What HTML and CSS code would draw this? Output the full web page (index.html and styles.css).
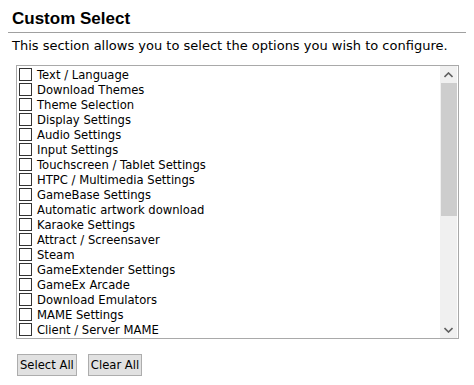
FILE: index.html
```html
<!DOCTYPE html>
<html>
<head>
<meta charset="utf-8">
<link rel="stylesheet" href="styles.css">
</head>
<body>
<h2 class="title">Custom Select</h2>
<p class="desc">This section allows you to select the options you wish to configure.</p>
<div class="listbox">
  <ul class="options">
    <li><input type="checkbox" class="cb"><span>Text / Language</span></li>
    <li><input type="checkbox" class="cb"><span>Download Themes</span></li>
    <li><input type="checkbox" class="cb"><span>Theme Selection</span></li>
    <li><input type="checkbox" class="cb"><span>Display Settings</span></li>
    <li><input type="checkbox" class="cb"><span>Audio Settings</span></li>
    <li><input type="checkbox" class="cb"><span>Input Settings</span></li>
    <li><input type="checkbox" class="cb"><span>Touchscreen / Tablet Settings</span></li>
    <li><input type="checkbox" class="cb"><span>HTPC / Multimedia Settings</span></li>
    <li><input type="checkbox" class="cb"><span>GameBase Settings</span></li>
    <li><input type="checkbox" class="cb"><span>Automatic artwork download</span></li>
    <li><input type="checkbox" class="cb"><span>Karaoke Settings</span></li>
    <li><input type="checkbox" class="cb"><span>Attract / Screensaver</span></li>
    <li><input type="checkbox" class="cb"><span>Steam</span></li>
    <li><input type="checkbox" class="cb"><span>GameExtender Settings</span></li>
    <li><input type="checkbox" class="cb"><span>GameEx Arcade</span></li>
    <li><input type="checkbox" class="cb"><span>Download Emulators</span></li>
    <li><input type="checkbox" class="cb"><span>MAME Settings</span></li>
    <li><input type="checkbox" class="cb"><span>Client / Server MAME</span></li>
  </ul>
  <div class="scrollbar">
    <div class="arrow"><svg width="9" height="6" viewBox="0 0 9 6"><path d="M0.5 5 L4.5 1 L8.5 5" fill="none" stroke="#606060" stroke-width="1.6"/></svg></div>
    <div class="track"><div class="thumb"></div></div>
    <div class="arrow"><svg width="9" height="6" viewBox="0 0 9 6"><path d="M0.5 1 L4.5 5 L8.5 1" fill="none" stroke="#606060" stroke-width="1.6"/></svg></div>
  </div>
</div>
<div class="actions">
  <button class="btn">Select All</button>
  <button class="btn">Clear All</button>
</div>
</body>
</html>
```

FILE: styles.css
```css
html, body {
  background: #ffffff;
}
body {
  margin: 8px;
  font-family: "DejaVu Sans", Verdana, sans-serif;
  font-size: 11.6px;
  color: #000000;
}
.title {
  margin: 0;
  padding: 0 4px 2px;
  font: bold 17px/22px "Liberation Sans", Arial, sans-serif;
  border-bottom: 1px solid #a0a0a0;
}
.desc {
  margin: 0;
  padding: 6px 4px 0;
  height: 26px;
  line-height: 14px;
  font-size: 13px;
  white-space: nowrap;
}
.listbox {
  display: flex;
  margin-left: 8px;
  width: 440px;
  height: 272px;
  border: 1px solid #a9a9a9;
  padding-right: 1px;
  overflow: hidden;
}
.options {
  list-style: none;
  margin: 0;
  padding: 1px 0 0 2px;
  flex: 1;
  overflow: hidden;
}
.options li {
  display: flex;
  align-items: center;
  height: 15px;
  white-space: nowrap;
}
.cb {
  -webkit-appearance: none;
  appearance: none;
  box-sizing: border-box;
  width: 13px;
  height: 13px;
  margin: 0 5px 0 0;
  border: 1px solid #333333;
  background: #ffffff;
  flex: none;
}
.scrollbar {
  width: 17px;
  display: flex;
  flex-direction: column;
  background: #f0f0f0;
}
.arrow {
  height: 17px;
  display: flex;
  align-items: center;
  justify-content: center;
}
.track {
  flex: 1;
}
.thumb {
  height: 133px;
  margin: 0 0 0 1px;
  background: #cdcdcd;
}
.actions {
  display: flex;
  gap: 11px;
  margin: 15px 0 0 9px;
}
.btn {
  font: 11.6px "DejaVu Sans", Verdana, sans-serif;
  height: 22px;
  padding: 0 2px;
  background: #e1e1e1;
  border: 1px solid #adadad;
  color: #000;
  border-radius: 0;
}
```
